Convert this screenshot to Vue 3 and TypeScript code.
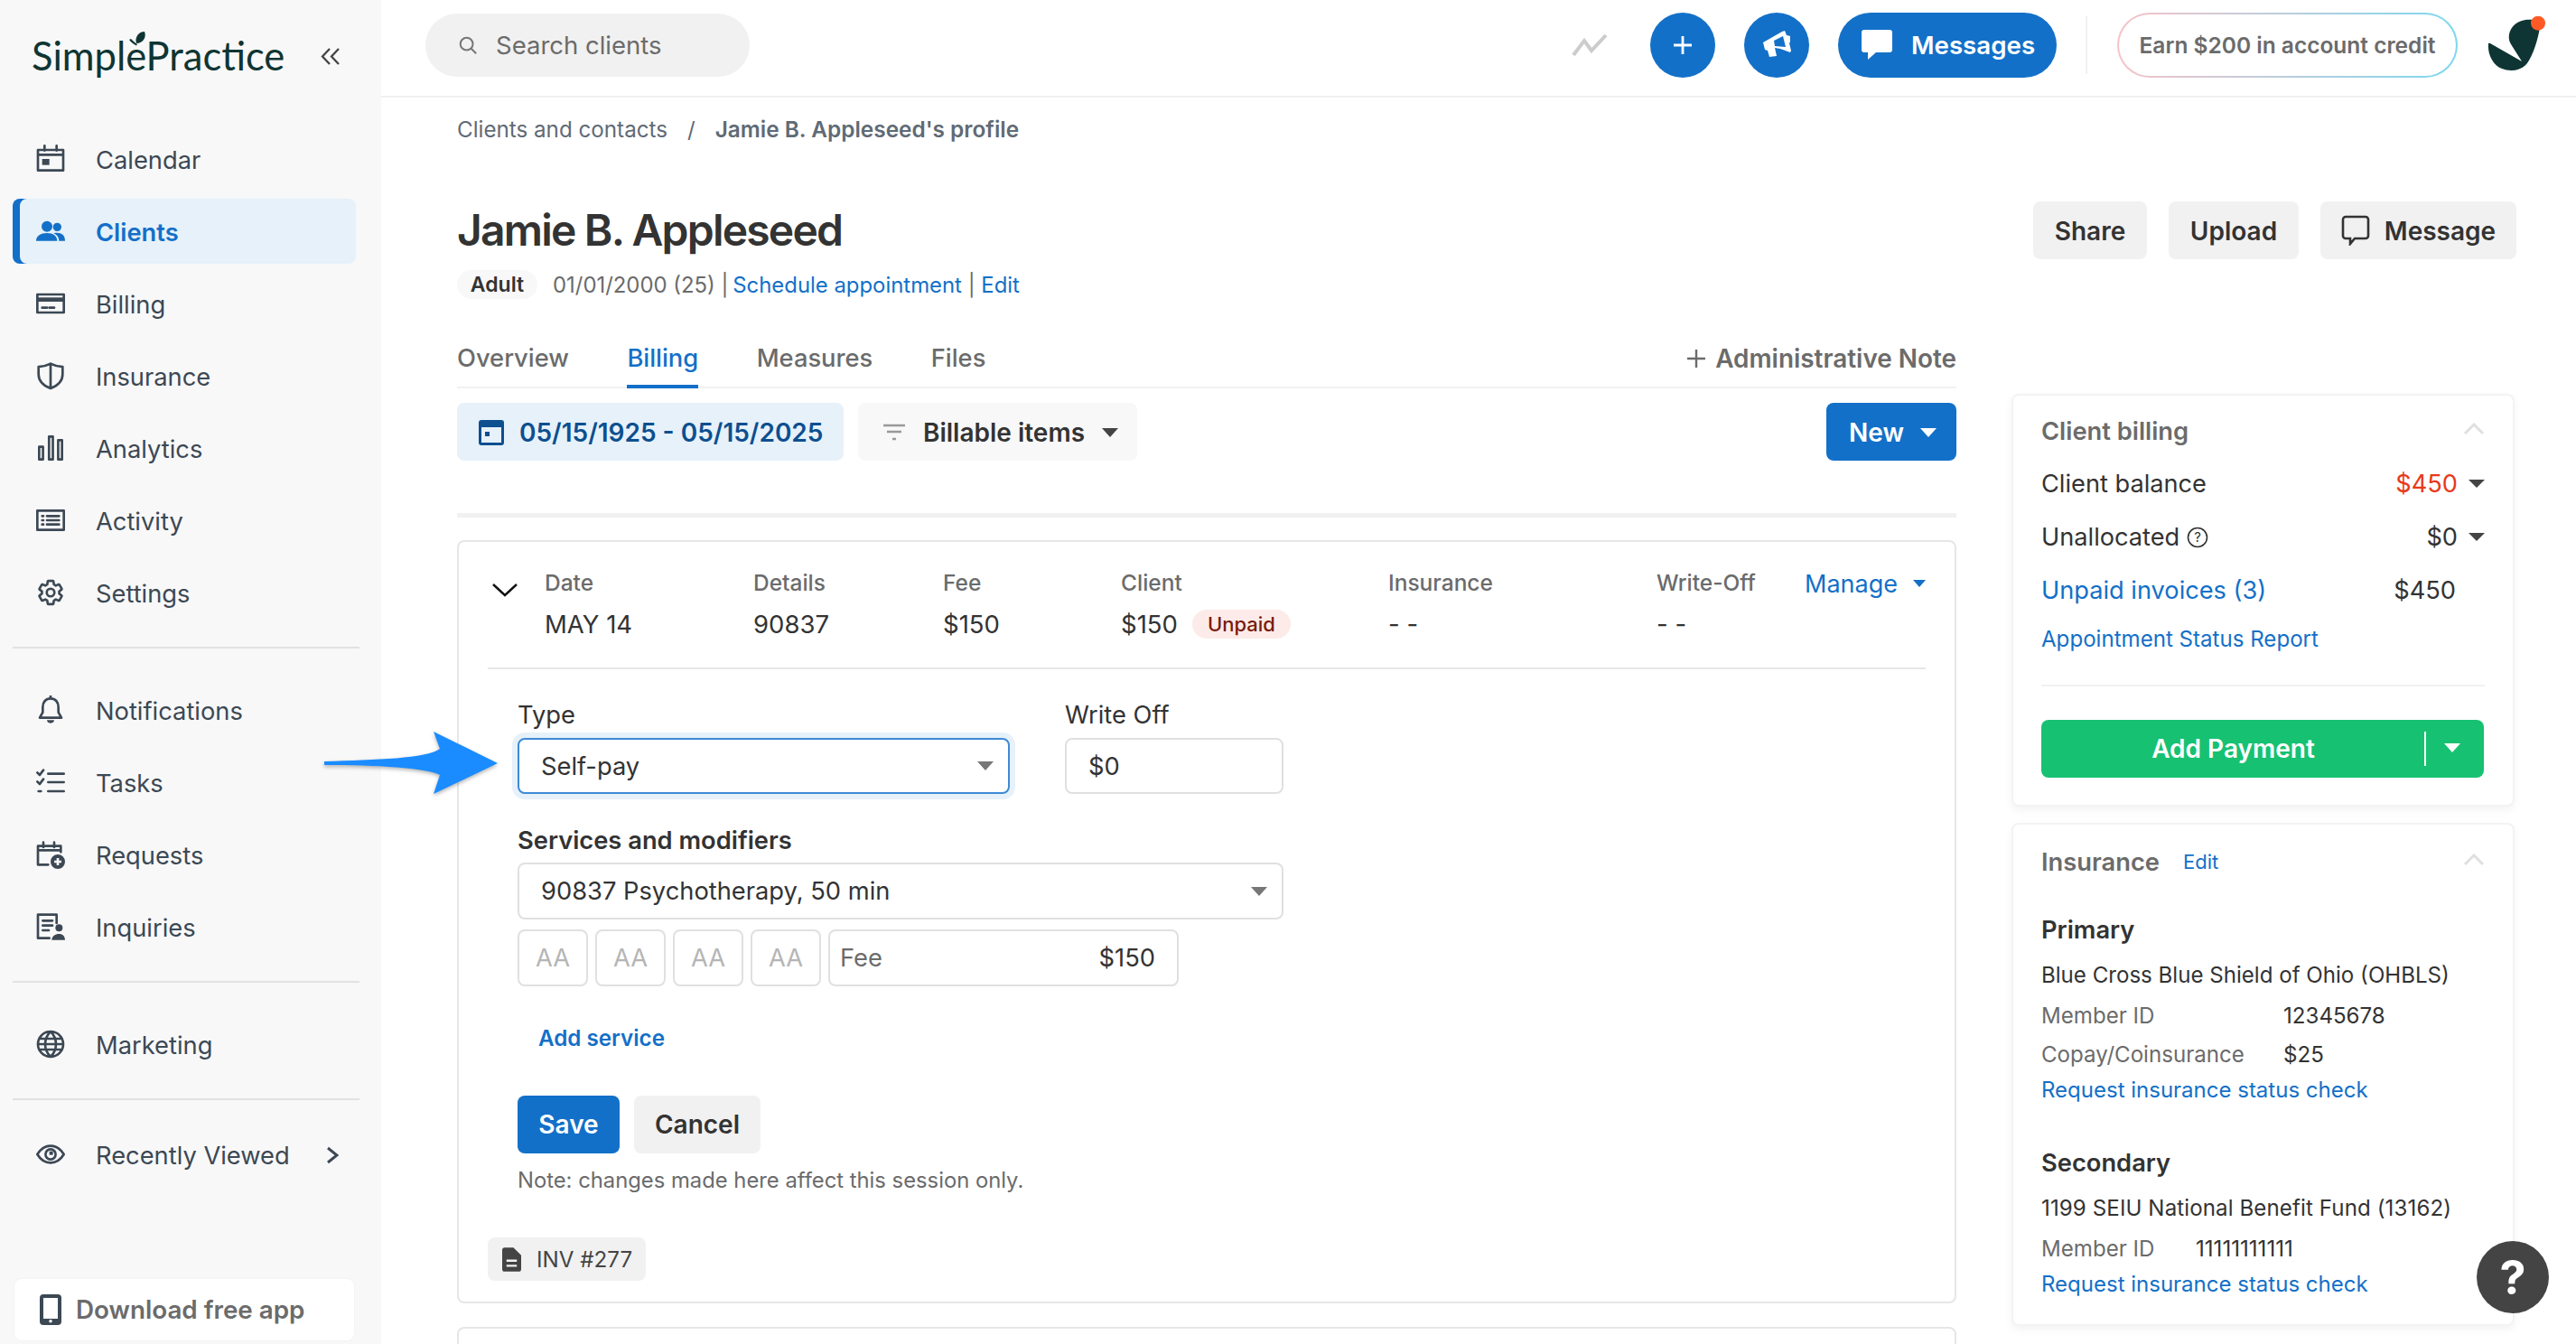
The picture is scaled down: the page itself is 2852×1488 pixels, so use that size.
<script setup lang="ts">
interface NavIcon { s?: string; f?: string }
interface NavItem { label: string; icon: NavIcon; active?: boolean; chevron?: boolean }

const gear =
  'M19.14 12.94c.04-.3.06-.61.06-.94 0-.32-.02-.64-.07-.94l2.03-1.58c.18-.14.23-.41.12-.61l-1.92-3.32c-.12-.22-.37-.29-.59-.22l-2.39.96c-.5-.38-1.03-.7-1.62-.94l-.36-2.54c-.04-.24-.24-.41-.48-.41h-3.84c-.24 0-.43.17-.47.41l-.36 2.54c-.59.24-1.13.57-1.62.94l-2.39-.96c-.22-.08-.47 0-.59.22L2.74 8.87c-.12.21-.08.47.12.61l2.03 1.58c-.05.3-.09.63-.09.94s.02.64.07.94l-2.03 1.58c-.18.14-.23.41-.12.61l1.92 3.32c.12.22.37.29.59.22l2.39-.96c.5.38 1.03.7 1.62.94l.36 2.54c.05.24.24.41.48.41h3.84c.24 0 .44-.17.47-.41l.36-2.54c.59-.24 1.13-.56 1.62-.94l2.39.96c.22.08.47 0 .59-.22l1.92-3.32c.12-.22.07-.47-.12-.61l-2.01-1.58zM12 8.8a3.2 3.2 0 1 0 0 6.4a3.2 3.2 0 0 0 0-6.4z'

const group1: NavItem[] = [
  { label: 'Calendar', icon: { s: 'M1.5 4.5h21v17h-21zM1.5 8.5h21M7 1v4M17 1v4', f: 'M5 12h6v5H5z' } },
  { label: 'Clients', active: true, icon: { f: 'M9 3.500a4.500 4.500 0 1 0 0 9a4.500 4.500 0 1 0 0-9zM17.500 5a3.500 3.500 0 1 1 0 7a3.500 3.500 0 0 1 0-7zM0 20c0-4 4-6.500 9-6.500s8.500 2.500 8.500 6.500zM14.500 13.700c1-.2 2-.3 3-.3 3.500 0 6.500 2 6.500 6.600h-5c0-2.600-1.500-5-4.500-6.300z' } },
  { label: 'Billing', icon: { s: 'M1 4.500h22v15H1zM5 15.500h4M11 15.500h4', f: 'M1 7h22v3.500H1z' } },
  { label: 'Insurance', icon: { s: 'M12 2c3 1.600 6 2.400 10 2.600v6c0 5.500-4 9.500-10 11.900C6 20.100 2 16.100 2 10.600v-6C6 4.400 9 3.600 12 2zM12 2v20' } },
  { label: 'Analytics', icon: { s: 'M2.500 11h3.200v10.500H2.500zM10.700 2.500h3.200v19h-3.200zM18.300 5.500h3.200v16h-3.200z' } },
  { label: 'Activity', icon: { s: 'M1 4h22v16H1zM9 8.500h10M9 12h10M9 15.500h10M5 8.500h1M5 12h1M5 15.500h1' } },
  { label: 'Settings', icon: { s: gear } },
]
const group2: NavItem[] = [
  { label: 'Notifications', icon: { s: 'M12 2.500c-4 0-6.500 3-6.500 7v4.500L3 18.500h18l-2.500-4.500V9.500c0-4-2.500-7-6.500-7z', f: 'M9 20.500h6c0 1.500-1.200 2.500-3 2.500s-3-1-3-2.500zM11 0h2v3h-2z' } },
  { label: 'Tasks', icon: { s: 'M10 5h13M10 12h13M10 19.500h13M1 4l2 2 3-4M1 11.500l2 2 3-4M2 19.500h2' } },
  { label: 'Requests', icon: { s: 'M10 20.500H1.500V5h19v5M6 2v4M15 2v4M1.500 8.500h19', f: 'M18 12a6 6 0 1 0 0 12a6 6 0 0 0 0-12zM17 15h2v2h2v2h-2v2h-2v-2h-2v-2h2z' } },
  { label: 'Inquiries', icon: { s: 'M11 21.500H1.500V2H17v7M5.500 7h8M5.500 11h8M5.500 15h5', f: 'M19 10a3 3 0 1 0 0 6a3 3 0 0 0 0-6zM13 23c0-3 3-5 6-5s5 2 5 5z' } },
]
const group3: NavItem[] = [
  { label: 'Marketing', icon: { s: 'M12 1.500a10.500 10.500 0 1 0 0 21a10.500 10.500 0 0 0 0-21zM12 1.500c-6 6-6 15 0 21M12 1.500c6 6 6 15 0 21M1.500 12h21M3 7.500h18M3 16.500h18' } },
]
const group4: NavItem[] = [
  { label: 'Recently Viewed', chevron: true, icon: { s: 'M1 12c3-5 7-7 11-7s8 2 11 7c-3 5-7 7-11 7s-8-2-11-7zM12 7.800a4.200 4.200 0 1 0 0 8.400a4.200 4.200 0 0 0 0-8.400z', f: 'M11 9.500h3v3h-3z' } },
]
const groups: NavItem[][] = [group1, group2, group3, group4]

const tabs = ['Overview', 'Billing', 'Measures', 'Files']
const rowCols = [
  { head: 'Date', value: 'MAY 14' },
  { head: 'Details', value: '90837' },
  { head: 'Fee', value: '$150' },
]
const modifiers = ['AA', 'AA', 'AA', 'AA']
</script>

<template>
  <div class="app">
    <aside class="sidebar">
      <div class="logo-row">
        <div class="logo">
          <span>SimplePractice</span>
          <svg class="leaf" viewBox="0 0 18 16"><path d="M8 13C6 7 10 0 17 0c2 5 0 12-9 13zM0 9l2-1c2 2 4 4 7 6l-1 1.500C5 14 2 12 0 9z" /></svg>
        </div>
        <svg class="collapse" viewBox="0 0 22 21"><path d="M10 2 2 10.500 10 19M20 2l-8 8.500 8 8.500" /></svg>
      </div>

      <template v-for="(group, gi) in groups" :key="gi">
        <nav class="nav-group">
          <a v-for="item in group" :key="item.label" class="nav-item" :class="{ active: item.active }">
            <svg class="nav-icon" viewBox="0 0 24 24">
              <path v-if="item.icon.s" class="st" :d="item.icon.s" />
              <path v-if="item.icon.f" class="fl" :d="item.icon.f" fill-rule="evenodd" />
            </svg>
            <span>{{ item.label }}</span>
            <svg v-if="item.chevron" class="nav-chev" viewBox="0 0 14 20"><path d="M2 2l10 8-10 8" /></svg>
          </a>
        </nav>
        <div v-if="gi < groups.length - 1" class="side-rule"></div>
      </template>

      <div class="download">
        <svg viewBox="0 0 24 34" class="dl-icon"><path fill-rule="evenodd" d="M4 0h16a4 4 0 0 1 4 4v26a4 4 0 0 1-4 4H4a4 4 0 0 1-4-4V4a4 4 0 0 1 4-4zM4 4v23h16V4zM12 28a1.800 1.800 0 1 0 0 3.600a1.800 1.800 0 0 0 0-3.600z" /></svg>
        <span>Download free app</span>
      </div>
    </aside>

    <div class="main">
      <header class="topbar">
        <div class="search">
          <svg viewBox="0 0 24 24" class="search-icon"><path d="M10.500 3a7.500 7.500 0 1 0 0 15a7.500 7.500 0 0 0 0-15zM16 16l6 6" /></svg>
          <span>Search clients</span>
        </div>
        <svg class="trend" viewBox="0 0 40 26"><path d="M2 24 14 8l8 11L38 2" /></svg>
        <button class="round plus"><svg viewBox="0 0 24 24"><path d="M12 2v20M2 12h20" /></svg></button>
        <button class="round mega">
          <svg viewBox="0 0 36 36"><path fill-rule="evenodd" d="M3 15 24 3l3-1 2 5 4 1v6l-1 2 2 8-1 2-11-4-6-1 2 9-8 1-2-7-3-1zM15 13l10-5 3 12-12-1z" /></svg>
        </button>
        <button class="msg-btn">
          <svg viewBox="0 0 34 34"><path d="M3 0h28a3 3 0 0 1 3 3v19a3 3 0 0 1-3 3H16l-9 8v-8H3a3 3 0 0 1-3-3V3a3 3 0 0 1 3-3z" /></svg>
          <span>Messages</span>
        </button>
        <div class="sep"></div>
        <div class="earn">Earn $200 in account credit</div>
        <div class="avatar">
          <svg viewBox="0 0 64 64">
            <path fill="#0e3533" d="M1 31Q0 29 3 30L38 50 26 31C20 22 26 6 42 4 50 3 59 4 58 12 56 26 50 44 44 52 38 60 26 62 16 58 6 54 0 42 1 31Z" />
            <circle cx="56" cy="7.700" r="8" fill="#ff5a26" />
          </svg>
        </div>
      </header>

      <div class="content">
        <section class="left">
          <div class="crumbs">
            <span>Clients and contacts</span><span class="slash">/</span><strong>Jamie B. Appleseed's profile</strong>
          </div>
          <h1>Jamie B. Appleseed</h1>
          <div class="meta">
            <span class="pill">Adult</span>
            <span class="dob">01/01/2000 (25) | <a class="sched">Schedule appointment</a> | <a>Edit</a></span>
          </div>

          <div class="tabs">
            <a v-for="t in tabs" :key="t" class="tab" :class="{ on: t === 'Billing' }">{{ t }}</a>
            <a class="admin"><svg viewBox="0 0 22 22"><path d="M11 1v20M1 11h20" /></svg>Administrative Note</a>
          </div>

          <div class="toolbar">
            <button class="date-btn">
              <svg viewBox="0 0 28 28"><path fill-rule="evenodd" d="M3 0h22a3 3 0 0 1 3 3v22a3 3 0 0 1-3 3H3a3 3 0 0 1-3-3V3a3 3 0 0 1 3-3zM3 8v17h22V8zM7 13h5v5H7z" /></svg>
              05/15/1925 - 05/15/2025
            </button>
            <button class="filter-btn">
              <svg viewBox="0 0 26 20"><path d="M1 2h24M5 9h16M11 17h4" /></svg>
              Billable items
              <i class="caret dark"></i>
            </button>
            <button class="new-btn">New<i class="caret white"></i></button>
          </div>

          <div class="thick-rule"></div>

          <article class="card">
            <div class="row">
              <svg class="row-chev" viewBox="0 0 30 16"><path d="M2 2l13 12L28 2" /></svg>
              <div v-for="c in rowCols" :key="c.head" class="col">
                <div class="col-head">{{ c.head }}</div>
                <div class="col-val">{{ c.value }}</div>
              </div>
              <div class="col">
                <div class="col-head">Client</div>
                <div class="col-val">$150<span class="unpaid">Unpaid</span></div>
              </div>
              <div class="col">
                <div class="col-head">Insurance</div>
                <div class="col-val">- -</div>
              </div>
              <div class="col">
                <div class="col-head">Write-Off</div>
                <div class="col-val">- -</div>
              </div>
              <a class="manage">Manage<i class="caret blue"></i></a>
            </div>

            <form class="form">
              <div class="form-row">
                <div>
                  <div class="label">Type</div>
                  <div class="field type-field"><span>Self-pay</span><i class="caret gray"></i></div>
                </div>
                <div>
                  <div class="label">Write Off</div>
                  <div class="field off-field">$0</div>
                </div>
              </div>
              <div class="label strong">Services and modifiers</div>
              <div class="field service-field"><span>90837 Psychotherapy, 50 min</span><i class="caret gray"></i></div>
              <div class="mods">
                <div v-for="(m, i) in modifiers" :key="i" class="mod">{{ m }}</div>
                <div class="fee"><span class="fee-l">Fee</span><span>$150</span></div>
              </div>
              <a class="add-service">Add service</a>
              <div class="form-actions">
                <button type="button" class="save">Save</button>
                <button type="button" class="cancel">Cancel</button>
              </div>
              <p class="note">Note: changes made here affect this session only.</p>
            </form>

            <div class="inv">
              <svg viewBox="0 0 22 28"><path fill-rule="evenodd" d="M3 0h10l9 9v16a3 3 0 0 1-3 3H3a3 3 0 0 1-3-3V3a3 3 0 0 1 3-3zM5 14v2.500h12V14zM5 20v2.500h12V20z" /></svg>
              <span>INV #277</span>
            </div>
          </article>

          <div class="card next"></div>
        </section>

        <section class="right">
          <div class="actions">
            <button class="ghost share">Share</button>
            <button class="ghost upload">Upload</button>
            <button class="ghost message">
              <svg viewBox="0 0 32 34"><path d="M5 2h22a3 3 0 0 1 3 3v18a3 3 0 0 1-3 3H15l-5 6v-6H5a3 3 0 0 1-3-3V5a3 3 0 0 1 3-3z" /></svg>
              Message
            </button>
          </div>

          <div class="panel billing">
            <div class="panel-title">
              <span>Client billing</span>
              <svg class="up" viewBox="0 0 24 14"><path d="M2 12 12 2l10 10" /></svg>
            </div>
            <div class="bal-row"><span>Client balance</span><b class="red">$450</b><i class="caret dark small"></i></div>
            <div class="bal-row">
              <span>Unallocated</span>
              <svg class="qm" viewBox="0 0 24 24"><circle cx="12" cy="12" r="10.500" /><text x="12" y="17" text-anchor="middle">?</text></svg>
              <b>$0</b><i class="caret dark small"></i>
            </div>
            <div class="bal-row"><a>Unpaid invoices (3)</a><b class="last">$450</b></div>
            <a class="report">Appointment Status Report</a>
            <div class="panel-rule"></div>
            <button class="pay">
              <span>Add Payment</span>
              <em></em>
              <i class="caret white"></i>
            </button>
          </div>

          <div class="panel ins">
            <div class="panel-title">
              <span>Insurance</span><a class="edit">Edit</a>
              <svg class="up" viewBox="0 0 24 14"><path d="M2 12 12 2l10 10" /></svg>
            </div>
            <h3 class="primary">Primary</h3>
            <div class="payer">Blue Cross Blue Shield of Ohio (OHBLS)</div>
            <div class="kv first"><span class="w1">Member ID</span><span>12345678</span></div>
            <div class="kv second"><span class="w1">Copay/Coinsurance</span><span>$25</span></div>
            <a class="status">Request insurance status check</a>
            <h3 class="secondary">Secondary</h3>
            <div class="payer wide">1199 SEIU National Benefit Fund (13162)</div>
            <div class="kv third"><span class="w2">Member ID</span><span>11111111111</span></div>
            <a class="status">Request insurance status check</a>
          </div>
        </section>
      </div>
    </div>

    <svg class="arrow" viewBox="0 0 196 72"><path d="M2 33C60 31 115 30 130 19L123 0 194 35 123 69 130 48C115 40 60 37 2 37Z" /></svg>
    <button class="help">?</button>
  </div>
</template>

<style>
html, body { margin: 0; background: #fff; }
</style>

<style scoped>
* { box-sizing: border-box; }
a { cursor: pointer; text-decoration: none; }
button { font-family: inherit; border: 0; padding: 0; cursor: pointer; }
h1, h3, p { margin: 0; }

.app {
  position: relative;
  display: flex;
  width: 2852px;
  height: 1488px;
  overflow: hidden;
  font-family: Inter, "Liberation Sans", sans-serif;
  color: #333;
  background: #fff;
}

/* Sidebar */
.sidebar {
  width: 422px;
  flex: none;
  display: flex;
  flex-direction: column;
  background: #f8f8f8;
  padding-bottom: 4px;
}
.logo-row { height: 140px; padding: 26px 0 0 35px; display: flex; align-items: flex-start; }
.logo { position: relative; font-family: Lato, sans-serif; font-size: 43.500px; line-height: 70px; color: #0f3533; width: 277px; white-space: nowrap; }
.leaf { position: absolute; left: 108px; top: 9px; width: 18px; height: 16px; fill: #0f3533; }
.collapse { width: 22px; height: 21px; margin: 26px 0 0 43px; fill: none; stroke: #444; stroke-width: 2.300; }
.nav-group { display: flex; flex-direction: column; gap: 8px; }
.nav-item {
  height: 72px; width: 380px; margin-left: 14px; padding: 2px 19px 0 26px;
  display: flex; align-items: center; gap: 34px;
  font-size: 27.300px; color: #3c4854; border-radius: 8px;
}
.nav-item.active { background: #e6f1fa; color: #1370c8; font-weight: 600; box-shadow: inset 8px 0 0 #1370c8; }
.nav-icon { width: 32px; height: 32px; flex: none; margin-top: -2px; }
.nav-icon .st { fill: none; stroke: #3c4854; stroke-width: 2; stroke-linejoin: round; stroke-linecap: round; }
.nav-icon .fl { fill: #3c4854; }
.active .nav-icon .fl { fill: #1370c8; }
.nav-chev { width: 14px; height: 20px; margin-left: auto; fill: none; stroke: #3c4854; stroke-width: 3; }
.side-rule { height: 2px; width: 384px; margin: 24px 0 32px 14px; background: #e2e2e2; }
.side-rule + .nav-group:last-of-type { margin-top: -8px; }
.download {
  margin: auto 0 0 16px; width: 376px; height: 68px; background: #fff; border-radius: 8px;
  display: flex; align-items: center; gap: 16px; padding-left: 28px;
  font-size: 27.800px; font-weight: 600; color: #6b6b6b; flex: none;
  box-shadow: 0 0 3px rgba(0, 0, 0, .05);
}
.dl-icon { width: 24px; height: 34px; fill: #3c4854; }

/* Top bar */
.main { flex: 1; min-width: 0; display: flex; flex-direction: column; }
.topbar {
  height: 108px; flex: none; display: flex; align-items: center;
  padding: 0 34px 6px 49px; border-bottom: 2px solid #f0f0f0;
}
.search {
  width: 359px; height: 70px; border-radius: 35px; background: #f1f1f1;
  display: flex; align-items: center; gap: 20px; padding-left: 36px;
  font-size: 27.500px; color: #6b6b6b;
}
.search-icon { width: 22px; height: 22px; fill: none; stroke: #777; stroke-width: 2.200; }
.trend { width: 40px; height: 26px; margin-left: auto; fill: none; stroke: #ccc; stroke-width: 4; }
.round { width: 72px; height: 72px; border-radius: 50%; background: #1370c8; display: flex; align-items: center; justify-content: center; }
.plus { margin-left: 47px; }
.plus svg { width: 24px; height: 24px; fill: none; stroke: #fff; stroke-width: 2.800; }
.mega { margin-left: 32px; }
.mega svg { width: 36px; height: 36px; fill: #fff; }
.msg-btn {
  margin-left: 32px; width: 242px; height: 72px; border-radius: 36px; background: #1370c8;
  display: flex; align-items: center; gap: 21px; padding-left: 26px;
  color: #fff; font-size: 27.700px; font-weight: 600;
}
.msg-btn svg { width: 34px; height: 34px; fill: #fff; }
.sep { width: 2px; height: 64px; margin-left: 32px; background: #f1f1f1; }
.earn {
  margin-left: 33px; width: 377px; height: 72px; border-radius: 36px;
  border: 2px solid transparent;
  background: linear-gradient(#fff, #fff) padding-box, linear-gradient(90deg, #f6c3c9, #7cd8ee) border-box;
  display: flex; align-items: center; justify-content: center;
  font-size: 24.500px; font-weight: 600; color: #6b6b6b; white-space: nowrap;
}
.avatar { margin-left: 33px; width: 64px; height: 64px; }
.avatar svg { display: block; width: 64px; height: 64px; overflow: visible; }

/* Content */
.content { display: flex; gap: 61px; padding-left: 84px; }
.left { width: 1660px; flex: none; padding-top: 19px; }
.crumbs { height: 32px; display: flex; align-items: center; font-size: 24.200px; color: #5f6b76; white-space: nowrap; }
.crumbs strong { font-weight: 600; font-size: 24.400px; }
.slash { margin: 0 22px; }
h1 { margin-top: 66px; font-size: 48px; line-height: 60px; font-weight: 600; letter-spacing: -1.800px; color: #333; }
.meta { margin-top: 14px; height: 32px; display: flex; align-items: center; font-size: 23.900px; }
.pill { width: 89px; height: 32px; border-radius: 16px; background: #f8f8f8; display: flex; align-items: center; justify-content: center; font-weight: 600; font-size: 23px; color: #333; }
.dob { margin-left: 17px; color: #6b6b6b; }
.dob a { color: #1370c8; }
.dob .sched { margin-left: -2px; }
.tabs { margin-top: 29px; height: 70px; display: flex; border-bottom: 2px solid #f1f1f1; position: relative; align-items: stretch; font-size: 27.300px; color: #6b6b6b; }
.tab { display: flex; align-items: center; margin-right: 64.500px; padding-top: 5px; font-weight: 500; }
.tab.on { color: #1370c8; box-shadow: inset 0 -4px 0 #1370c8; margin-bottom: -2px; padding-top: 3px; }
.admin { margin-left: auto; display: flex; align-items: center; gap: 10px; padding-top: 5px; font-size: 27.900px; font-weight: 600; }
.admin svg { width: 22px; height: 22px; fill: none; stroke: #6b6b6b; stroke-width: 2.400; }
.toolbar { margin-top: 16px; height: 64px; display: flex; }
.toolbar button { height: 64px; border-radius: 8px; display: flex; align-items: center; padding-top: 1px; font-size: 28px; font-weight: 600; }
.date-btn { width: 428px; padding-left: 24px; gap: 17px; background: #e6f1fa; color: #0d4f8f; }
.date-btn svg { width: 28px; height: 28px; fill: #0d4f8f; }
.filter-btn { margin-left: 16px; width: 309px; padding-left: 27px; gap: 19px; background: #f8f8f8; color: #333; }
.filter-btn svg { width: 26px; height: 20px; fill: none; stroke: #999; stroke-width: 2.600; }
.new-btn { margin-left: auto; width: 144px; padding-left: 25px; gap: 18px; background: #1370c8; color: #fff; }

.caret { display: block; width: 0; height: 0; border-left: 9px solid transparent; border-right: 9px solid transparent; border-top: 10px solid #fff; flex: none; }
.caret.dark { border-top-color: #444; }
.caret.blue { border-top-color: #1370c8; border-left-width: 7.500px; border-right-width: 7.500px; border-top-width: 8px; }
.caret.gray { border-top-color: #777; }
.caret.small { border-left-width: 9px; border-right-width: 9px; border-top-width: 9px; }

.thick-rule { margin-top: 58px; height: 5px; background: #f1f1f1; }
.card { margin-top: 25px; height: 845px; border: 2px solid #e6e6e6; border-radius: 8px; padding: 0 32px; }
.card.next { margin-top: 26px; height: 200px; }
.row { height: 141px; display: flex; border-bottom: 2px solid #e6e6e6; padding-top: 30px; position: relative; }
.row-chev { position: absolute; left: 4px; top: 45px; width: 30px; height: 16px; fill: none; stroke: #111; stroke-width: 2.400; }
.col { flex: none; }
.col:nth-of-type(1) { margin-left: 63px; width: 231px; }
.col:nth-of-type(2) { width: 210px; }
.col:nth-of-type(3) { width: 197px; }
.col:nth-of-type(4) { width: 296px; }
.col:nth-of-type(5) { width: 297px; }
.col:nth-of-type(6) { width: 164px; }
.col-head { font-size: 24.500px; line-height: 30px; font-weight: 500; color: #6b6b6b; }
.col-val { margin-top: 15px; font-size: 27.500px; line-height: 32px; color: #333; display: flex; align-items: center; white-space: nowrap; }
.unpaid { margin-left: 16px; width: 109px; height: 32px; border-radius: 16px; background: #fcebe8; color: #7a1a0c; font-size: 22px; font-weight: 500; display: flex; align-items: center; justify-content: center; }
.manage { display: flex; align-items: center; gap: 17px; height: 32px; font-size: 27px; color: #1370c8; white-space: nowrap; }

.form { padding-left: 33px; }
.form-row { margin-top: 36px; display: flex; gap: 61px; }
.label { font-size: 27.300px; line-height: 30px; margin-bottom: 10px; color: #333; }
.label.strong { margin-top: 37px; margin-bottom: 9px; font-weight: 600; }
.field {
  height: 63px; border: 2px solid #e0e0e0; border-radius: 8px; display: flex; align-items: center;
  justify-content: space-between; padding: 0 16px 0 24px; font-size: 27.300px; color: #333; background: #fff;
}
.type-field { width: 545px; height: 62px; border-color: #3d8ad6; box-shadow: 0 0 0 6px #e6f1fa; padding-right: 16px; }
.off-field { width: 242px; height: 62px; }
.service-field { width: 848px; }
.mods { margin-top: 11px; display: flex; gap: 8px; }
.mod { width: 78px; height: 63px; border: 2px solid #e0e0e0; border-radius: 8px; display: flex; align-items: center; justify-content: center; font-size: 27.300px; color: #b5b5b5; }
.fee { width: 388px; height: 63px; border: 2px solid #e0e0e0; border-radius: 8px; display: flex; align-items: center; justify-content: space-between; padding: 0 24px 0 11px; font-size: 27.300px; }
.fee-l { color: #6b6b6b; }
.add-service { display: block; margin: 43px 0 0 23px; font-size: 24.200px; line-height: 30px; font-weight: 600; color: #1370c8; }
.form-actions { margin-top: 48px; display: flex; gap: 16px; }
.form-actions button { height: 64px; border-radius: 8px; font-size: 28px; font-weight: 600; }
.save { width: 113px; background: #1370c8; color: #fff; }
.cancel { width: 140px; background: #f1f1f1; color: #333; }
.note { margin-top: 15px; font-size: 23.800px; line-height: 30px; color: #6b6b6b; }
.inv { margin-top: 48px; width: 175px; height: 48px; border-radius: 8px; background: #f1f1f1; display: flex; align-items: center; gap: 17px; padding-left: 16px; font-size: 24.200px; color: #444; }
.inv svg { width: 21px; height: 27px; fill: #444; }

/* Right column */
.right { width: 557px; flex: none; padding-top: 115px; }
.actions { height: 64px; display: flex; justify-content: flex-end; gap: 24px; margin-right: -2px; }
.ghost { height: 64px; border-radius: 8px; background: #f1f1f1; color: #333; font-size: 28px; font-weight: 600; display: flex; align-items: center; justify-content: center; gap: 16px; padding-top: 2px; }
.share { width: 126px; }
.upload { width: 144px; }
.message { width: 217px; }
.ghost svg { width: 32px; height: 34px; fill: none; stroke: #333; stroke-width: 2.600; margin-top: -2px; }
.panel {
  border: 2px solid #f3f3f3; border-radius: 8px; padding: 0 31px;
  box-shadow: 0 4px 10px rgba(0, 0, 0, .05); background: #fff;
}
.billing { margin-top: 149px; height: 457px; padding-top: 23px; }
.ins { margin-top: 18px; height: 557px; padding-top: 25px; }
.panel-title { display: flex; align-items: center; height: 32px; font-size: 27.300px; font-weight: 600; color: #6b6b6b; position: relative; }
.up { position: absolute; right: 0; top: 7px; width: 24px; height: 14px; fill: none; stroke: #e0e0e0; stroke-width: 3; }
.edit { margin-left: 26px; font-size: 22px; font-weight: 400; color: #1370c8; }
.bal-row { height: 59px; display: flex; align-items: center; font-size: 27.200px; color: #333; }
.billing .panel-title { margin-bottom: 13px; }
.bal-row b { font-weight: 400; margin-left: auto; margin-right: 12px; }
.bal-row b.red { color: #e8391a; }
.bal-row b.last { margin-right: 32px; }
.bal-row a { color: #1370c8; }
.qm { width: 24px; height: 24px; margin-left: 8px; fill: none; stroke: #333; stroke-width: 1.600; }
.qm text { font-family: Inter, sans-serif; font-size: 15px; fill: #333; stroke: none; }
.report { display: block; margin-top: 10px; font-size: 24.100px; line-height: 30px; color: #1370c8; }
.panel-rule { margin-top: 35px; height: 2px; background: #f1f1f1; }
.pay {
  margin-top: 37px; width: 490px; height: 64px; border-radius: 8px; background: #17c172; color: #fff;
  font-size: 28px; font-weight: 600; position: relative; display: block;
}
.pay span { display: block; width: 425px; text-align: center; }
.pay em { position: absolute; left: 424px; top: 13px; width: 2px; height: 38px; background: #fff; }
.pay .caret { position: absolute; left: 446px; top: 26px; }
.primary, .secondary { font-size: 27.300px; line-height: 32px; font-weight: 600; color: #333; }
.primary { margin-top: 44px; }
.secondary { margin-top: 50px; }
.payer { margin-top: 19px; font-size: 24.100px; line-height: 30px; color: #333; white-space: nowrap; }
.payer.wide { letter-spacing: .1px; }
.kv { font-size: 24.100px; line-height: 30px; display: flex; color: #333; }
.kv.first, .kv.third { margin-top: 15px; }
.kv.second { margin-top: 13px; }
.w1 { width: 268px; color: #6b6b6b; }
.w2 { width: 171px; color: #6b6b6b; }
.status { display: block; margin-top: 9px; font-size: 24px; line-height: 30px; color: #1370c8; }

/* Overlays */
.arrow { position: absolute; left: 357px; top: 810px; width: 196px; height: 72px; fill: #1a8cff; filter: drop-shadow(0 2px 2px rgba(0, 0, 0, .3)); }
.help { position: absolute; left: 2742px; top: 1374px; width: 80px; height: 80px; border-radius: 50%; background: #444; color: #fff; font-size: 52px; font-weight: 700; display: flex; align-items: center; justify-content: center; }
</style>
